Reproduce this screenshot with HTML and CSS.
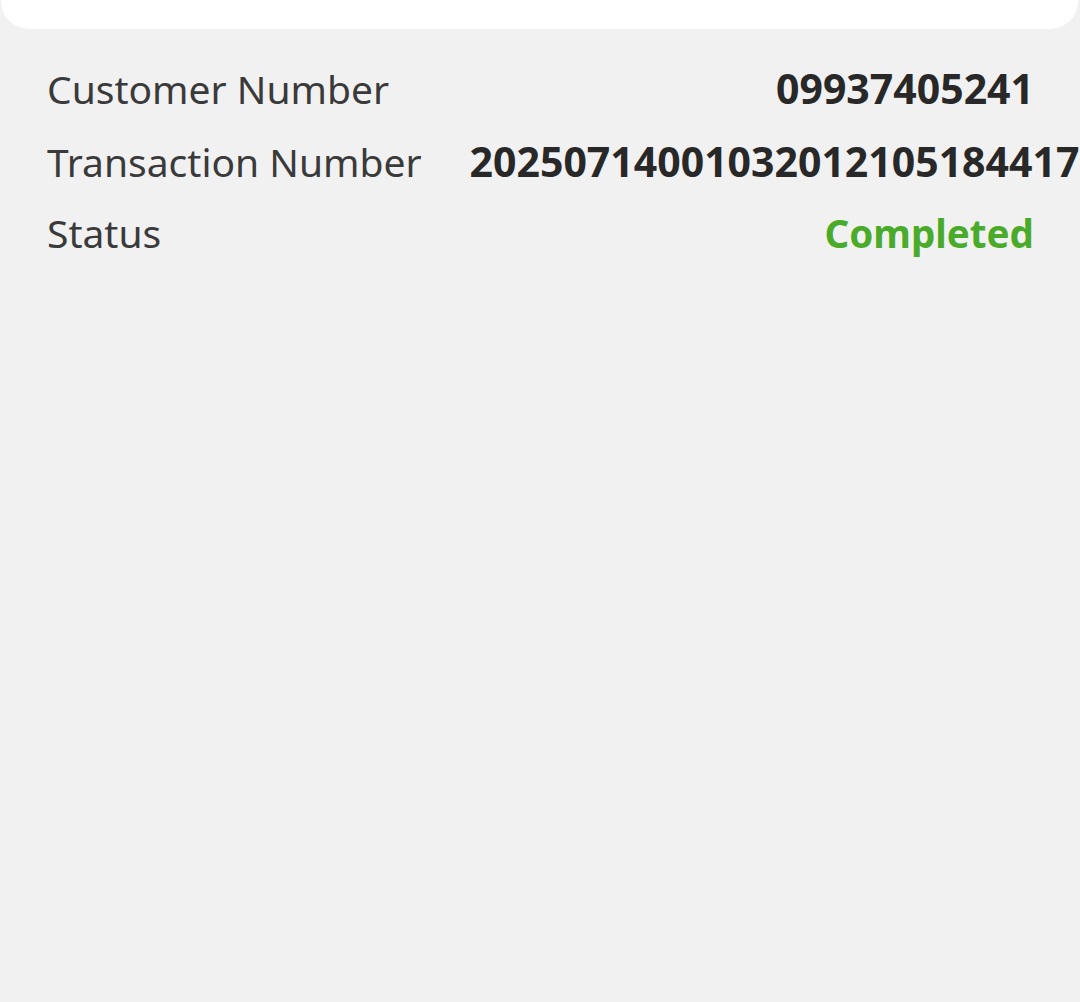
FILE: index.html
```html
<!DOCTYPE html>
<html>
<head>
<meta charset="utf-8">
<link rel="stylesheet" href="styles.css">
</head>
<body>
<div class="card"></div>
<div class="details">
  <div class="row">
    <span class="label">Customer Number</span>
    <span class="value">09937405241</span>
  </div>
  <div class="row">
    <span class="label">Transaction Number</span>
    <span class="value">2025071400103201210518441795</span>
  </div>
  <div class="row">
    <span class="label">Status</span>
    <span class="value ok">Completed</span>
  </div>
</div>
</body>
</html>
```
FILE: styles.css
```css
html, body {
  margin: 0;
  padding: 0;
  background: #f1f1f1;
  height: 100%;
  overflow: hidden;
}
body {
  font-family: "Noto Sans", "Open Sans", sans-serif;
  color: #333;
}
.card {
  height: 29px;
  margin: 0 2px 0 1px;
  background: #fff;
  border-radius: 0 0 28px 28px;
}
.details {
  padding: 32px 46px 0 47px;
  display: flex;
  flex-direction: column;
}
.row {
  display: flex;
  align-items: baseline;
  justify-content: space-between;
  height: 72.5px;
  line-height: 54px;
  white-space: nowrap;
}
.label {
  font-size: 39px;
  color: #3a3a3a;
  flex: none;
}
.value {
  flex: none;
  font-size: 41px;
  font-weight: 700;
  color: #282828;
  margin-left: 48px;
  text-align: right;
}
.value.ok {
  font-size: 38.6px;
  color: #4aab2a;
}
```
